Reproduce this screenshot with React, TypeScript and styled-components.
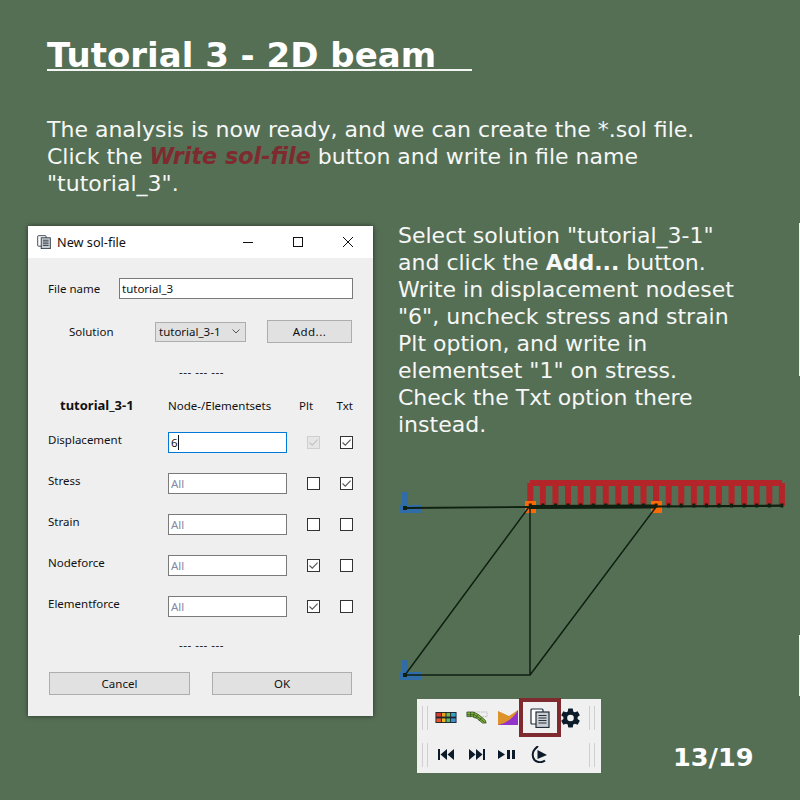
import styled, { createGlobalStyle } from 'styled-components';

const GlobalStyle = createGlobalStyle`
  html, body {
    margin: 0;
    padding: 0;
    background: #556f55;
  }
`;

const Slide = styled.div`
  position: relative;
  width: 800px;
  height: 800px;
  overflow: hidden;
  background: #556f55;
  font-family: "DejaVu Sans", sans-serif;
  color: #fff;
`;

const EdgeMark = styled.span<{ $top: number; $height: number }>`
  position: absolute;
  top: ${(p) => p.$top}px;
  right: 0;
  width: 1px;
  height: ${(p) => p.$height}px;
  background: #f4f6f4;
`;

const Header = styled.header`
  padding: 33px 0 0 47px;
`;

const Title = styled.h1`
  width: 425px;
  height: 36px;
  margin: 0;
  border-bottom: 2px solid #f4f6f4;
  font-size: 34px;
  line-height: 44px;
  font-weight: 700;
  white-space: nowrap;
`;

const Intro = styled.p`
  margin: 45px 0 0;
  font-size: 22px;
  line-height: 27px;
  color: #f6f7f6;
`;

const RedWords = styled.b`
  font-size: 22.3px;
  font-style: italic;
  color: #7f2a2e;
`;

const Columns = styled.main`
  display: flex;
  margin-top: 25px;
  padding-left: 28px;
`;

const Dialog = styled.section`
  flex: none;
  width: 345px;
  height: 490px;
  margin-top: 4px;
  background: #efefef;
  box-shadow: 0 0 5px rgba(0, 0, 0, 0.55);
  font-family: "Noto Sans", sans-serif;
  font-size: 11.5px;
  color: #111;
`;

const TitleBar = styled.div`
  display: flex;
  align-items: center;
  height: 32px;
  padding-left: 9px;
  background: #fff;
`;

const TitleText = styled.span`
  margin-left: 6px;
  flex: 1;
  font-size: 12.7px;
`;

const WindowButton = styled.span`
  display: flex;
  align-items: center;
  justify-content: center;
  width: 50px;
  height: 32px;
`;

const DialogBody = styled.div`
  padding: 20px 20px 0;
`;

const FileRow = styled.div`
  display: flex;
  align-items: center;
  justify-content: space-between;
`;

const SolutionRow = styled.div`
  display: flex;
  align-items: center;
  height: 23px;
  margin-top: 21px;
  padding-left: 21px;
`;

const SolutionLabel = styled.span`
  width: 86px;
  flex: none;
`;

const Combo = styled.div`
  display: flex;
  align-items: center;
  justify-content: space-between;
  box-sizing: border-box;
  width: 91px;
  height: 20px;
  padding: 0 5px 0 3px;
  border: 1px solid #adadad;
  background: #e1e1e1;
`;

const PushButton = styled.div<{ $width: number }>`
  display: flex;
  align-items: center;
  justify-content: center;
  box-sizing: border-box;
  width: ${(p) => p.$width}px;
  height: 23px;
  border: 1px solid #adadad;
  background: #e1e1e1;
`;

const AddButton = styled(PushButton)`
  margin-left: 21px;
  letter-spacing: 0.5px;
`;

const Dashes = styled.div<{ $top: number }>`
  height: 16px;
  margin-top: ${(p) => p.$top}px;
  line-height: 16px;
  text-align: center;
  letter-spacing: 0.5px;
  transform: translateX(1px);
`;

const HeadRow = styled.div`
  display: grid;
  grid-template-columns: 120px 119px 1fr auto;
  align-items: center;
  height: 18px;
  margin-top: 16px;
`;

const SolutionName = styled.b`
  padding-left: 12px;
  font-size: 13px;
`;

const PltHead = styled.span`
  padding-left: 12px;
`;

const ResultGrid = styled.div`
  display: grid;
  grid-template-columns: 120px 119px 46px 20px;
  grid-auto-rows: 21px;
  row-gap: 20px;
  margin-top: 18px;
`;

const ResultRow = styled.div`
  display: contents;
`;

const RowLabel = styled.span`
  line-height: 15px;
`;

const TextBox = styled.div<{ $focus?: boolean; $muted?: boolean; $wide?: boolean }>`
  display: flex;
  align-items: center;
  box-sizing: border-box;
  width: ${(p) => (p.$wide ? '234px' : 'auto')};
  height: 21px;
  padding-left: 2px;
  border: 1px solid ${(p) => (p.$focus ? '#0078d7' : '#7a7a7a')};
  background: #fff;
  color: ${(p) => (p.$muted ? '#8489a6' : '#111')};
`;

const Caret = styled.span`
  width: 1px;
  height: 15px;
  background: #111;
`;

const Check = styled.span<{ $disabled?: boolean; $side: 'left' | 'right' }>`
  display: flex;
  align-self: center;
  justify-self: ${(p) => (p.$side === 'left' ? 'start' : 'end')};
  margin-left: ${(p) => (p.$side === 'left' ? '20px' : '0')};
  box-sizing: border-box;
  width: 13px;
  height: 13px;
  border: 1px solid ${(p) => (p.$disabled ? '#cfcfcf' : '#333')};
  background: ${(p) => (p.$disabled ? '#e6e6e6' : '#fff')};
`;

const FooterRow = styled.div`
  display: flex;
  justify-content: space-between;
  margin-top: 19px;
  padding: 0 1px;
`;

const SideColumn = styled.div`
  flex: 1;
  padding-left: 25px;
`;

const SideText = styled.p`
  margin: 0;
  font-size: 22px;
  line-height: 27px;
  color: #f6f7f6;
  white-space: nowrap;
`;

const Model = styled.svg`
  display: block;
  width: 402px;
  height: 225px;
  margin-top: 31px;
`;

const BottomRow = styled.div`
  display: flex;
  align-items: flex-start;
  margin-top: 5px;
  padding-left: 19px;
`;

const Toolbar = styled.div`
  flex: none;
  width: 184px;
  height: 74px;
  background: #f0f0f0;
`;

const ToolRow = styled.div`
  display: flex;
  align-items: center;
  height: 37px;
  padding: 0 6px 0 5px;
`;

const GripPair = styled.span`
  flex: none;
  display: flex;
  gap: 4px;
`;

const Grip = styled.span`
  width: 1px;
  height: 24px;
  background: #cfcfcf;
`;

const Icons = styled.div`
  flex: 1;
  display: flex;
  align-items: center;
`;

const ToolIcon = styled.svg<{ $left: number }>`
  display: block;
  flex: none;
  margin-left: ${(p) => p.$left}px;
`;

const Highlight = styled.span`
  flex: none;
  display: flex;
  align-items: center;
  justify-content: center;
  box-sizing: border-box;
  width: 42px;
  height: 39px;
  margin: 0 0 0 1px;
  border: 4px solid #7f2a2e;
`;

const PageNumber = styled.div`
  margin: 41px 0 0 72px;
  font-size: 25.6px;
  line-height: 34px;
  font-weight: 700;
`;

const rows = [
  { name: 'Displacement', value: '6', plt: true, txt: true, focus: true, pltDisabled: true },
  { name: 'Stress', value: 'All', plt: false, txt: true },
  { name: 'Strain', value: 'All', plt: false, txt: false },
  { name: 'Nodeforce', value: 'All', plt: true, txt: false },
  { name: 'Elementforce', value: 'All', plt: true, txt: false },
];

const teeth = Array.from({ length: 21 }, (_, i) => 129.3 + i * 12.58);

function Tick({ color = '#555' }: { color?: string }) {
  return (
    <svg width="11" height="11" viewBox="0 0 11 11">
      <path d="M1.5 5.5 L4.3 8.2 L9.6 2.6" fill="none" stroke={color} strokeWidth="1.1" />
    </svg>
  );
}

function CheckBox({ on, disabled, side }: { on: boolean; disabled?: boolean; side: 'left' | 'right' }) {
  return (
    <Check $disabled={disabled} $side={side}>
      {on && <Tick color={disabled ? '#c4c4c4' : '#555'} />}
    </Check>
  );
}

function CopyGlyph({ size }: { size: number }) {
  return (
    <svg width={size} height={size} viewBox="0 0 20 20">
      <rect x="1" y="1" width="12" height="15" rx="1" fill="#fff" stroke="#1f2d3a" strokeWidth="1.2" />
      <rect x="6" y="4" width="13" height="15.5" fill="#c9cdd1" stroke="#1f2d3a" strokeWidth="1.2" />
      <path d="M8.5 7.5h8M8.5 10h8M8.5 12.5h8M8.5 15h8" stroke="#27333f" strokeWidth="1.2" />
    </svg>
  );
}

function Grips() {
  return (
    <GripPair>
      <Grip />
      <Grip />
    </GripPair>
  );
}

function Beam() {
  // coordinates are relative to the svg's corner at (398, 470) on the slide
  return (
    <Model viewBox="0 0 402 225">
      <rect x="132" y="11" width="252" height="6" fill="#b32528" />
      {teeth.map((x) => (
        <rect key={x} x={x} y="14" width="6" height="23" fill="#b32528" />
      ))}
      <path d="M127 32h11v12h-11zM253 32h11v12h-11z" fill="#fb6a07" />
      <path d="M4 23h6v13h13v8H2v-8h2zM4 191h6v12h13v8H2v-8h2z" fill="#2f6ca8" />
      <g stroke="#0f1f10" fill="none" strokeWidth="1.5">
        <path d="M7 39 L131 38" strokeWidth="1.8" />
        <path d="M131 38 L257 37.5" strokeWidth="4" />
        <path d="M257 37.5 L385 36.7" strokeWidth="2.2" />
        <path d="M7 206 H132 V38 M7 206 L131 38 M132 206 L258 38" />
      </g>
      {teeth.map((x) => (
        <rect key={x} x={x + 1.5} y="34.5" width="3" height="4" fill="#0f1f10" />
      ))}
      <rect x="5" y="37" width="4" height="4" fill="#0f1f10" />
      <rect x="5" y="204" width="4" height="4" fill="#0f1f10" />
    </Model>
  );
}

export default function App() {
  return (
    <Slide>
      <GlobalStyle />
      <EdgeMark $top={223} $height={153} />
      <EdgeMark $top={635} $height={61} />
      <Header>
        <Title>Tutorial 3 - 2D beam</Title>
        <Intro>
          The analysis is now ready, and we can create the *.sol file.
          <br />
          Click the <RedWords>Write sol-file</RedWords> button and write in file name
          <br />
          "tutorial_3".
        </Intro>
      </Header>
      <Columns>
        <Dialog>
          <TitleBar>
            <CopyGlyph size={14} />
            <TitleText>New sol-file</TitleText>
            <WindowButton>
              <svg width="10" height="10" viewBox="0 0 10 10">
                <path d="M0 5.5h10" stroke="#111" />
              </svg>
            </WindowButton>
            <WindowButton>
              <svg width="10" height="10" viewBox="0 0 10 10">
                <rect x="0.5" y="0.5" width="9" height="9" fill="none" stroke="#111" />
              </svg>
            </WindowButton>
            <WindowButton>
              <svg width="10" height="10" viewBox="0 0 10 10">
                <path d="M0 0l10 10M10 0L0 10" stroke="#111" />
              </svg>
            </WindowButton>
          </TitleBar>
          <DialogBody>
            <FileRow>
              <span>File name</span>
              <TextBox $wide>tutorial_3</TextBox>
            </FileRow>
            <SolutionRow>
              <SolutionLabel>Solution</SolutionLabel>
              <Combo>
                tutorial_3-1
                <svg width="8" height="5" viewBox="0 0 8 5">
                  <path d="M0.5 0.5L4 4l3.5-3.5" fill="none" stroke="#555" />
                </svg>
              </Combo>
              <AddButton $width={85}>Add...</AddButton>
            </SolutionRow>
            <Dashes $top={21}>--- --- ---</Dashes>
            <HeadRow>
              <SolutionName>tutorial_3-1</SolutionName>
              <span>Node-/Elementsets</span>
              <PltHead>Plt</PltHead>
              <span>Txt</span>
            </HeadRow>
            <ResultGrid>
              {rows.map((row) => (
                <ResultRow key={row.name}>
                  <RowLabel>{row.name}</RowLabel>
                  <TextBox $focus={row.focus} $muted={!row.focus}>
                    {row.value}
                    {row.focus && <Caret />}
                  </TextBox>
                  <CheckBox on={row.plt} disabled={row.pltDisabled} side="left" />
                  <CheckBox on={row.txt} side="right" />
                </ResultRow>
              ))}
            </ResultGrid>
            <Dashes $top={20}>--- --- ---</Dashes>
            <FooterRow>
              <PushButton $width={141}>Cancel</PushButton>
              <PushButton $width={140}>OK</PushButton>
            </FooterRow>
          </DialogBody>
        </Dialog>
        <SideColumn>
          <SideText>
            Select solution "tutorial_3-1"
            <br />
            and click the <b>Add...</b> button.
            <br />
            Write in displacement nodeset
            <br />
            "6", uncheck stress and strain
            <br />
            Plt option, and write in
            <br />
            elementset "1" on stress.
            <br />
            Check the Txt option there
            <br />
            instead.
          </SideText>
          <Beam />
          <BottomRow>
            <Toolbar>
              <ToolRow>
                <Grips />
                <Icons>
                  <ToolIcon $left={7} width="22" height="11" viewBox="0 0 23 12">
                    <rect width="23" height="12" fill="#1b2430" />
                    <path d="M1 1h5v4H1z" fill="#d8392b" />
                    <path d="M7 1h4v4H7z" fill="#e8a020" />
                    <path d="M12 1h4v4h-4z" fill="#79b844" />
                    <path d="M17 1h5v4h-5z" fill="#3aa0c8" />
                    <path d="M1 7h5v4H1z" fill="#e2572b" />
                    <path d="M7 7h4v4H7z" fill="#e9b72a" />
                    <path d="M12 7h4v4h-4z" fill="#58b868" />
                    <path d="M17 7h5v4h-5z" fill="#3f8fd0" />
                  </ToolIcon>
                  <ToolIcon $left={9} width="22" height="13" viewBox="0 0 24 14">
                    <path d="M9 1h14v5H17" fill="none" stroke="#b5b5b5" strokeDasharray="1.5 1" />
                    <path d="M1 1h7l6 3 7 6 1 3-4 0-6-5-5-2H1z" fill="#7fb13a" stroke="#26401c" strokeWidth="0.8" />
                    <path d="M5 1v5M9 1l-1 6M13 4l-3 4M17 7l-3 4M1 4h8l6 4 5 4" fill="none" stroke="#26401c" strokeWidth="0.7" />
                  </ToolIcon>
                  <ToolIcon $left={10} width="20" height="15" viewBox="0 0 20 15">
                    <path d="M0 1 L11 6 L20 0 V15 H0z" fill="#dd922a" />
                    <path d="M0 15 C8 13 15 9 20 0 V15z" fill="#9333c9" />
                  </ToolIcon>
                  <Highlight>
                    <CopyGlyph size={20} />
                  </Highlight>
                  <ToolIcon $left={0} width="19" height="20" viewBox="2 1.5 20 21">
                    <path
                      fill="#0c1b2a"
                      d="M19.43 12.98c.04-.32.07-.64.07-.98s-.03-.66-.07-.98l2.11-1.65a.5.5 0 0 0 .12-.64l-2-3.46a.5.5 0 0 0-.61-.22l-2.49 1a7.3 7.3 0 0 0-1.69-.98l-.38-2.65A.49.49 0 0 0 14 2h-4a.49.49 0 0 0-.49.42l-.38 2.65c-.61.25-1.17.59-1.69.98l-2.49-1a.49.49 0 0 0-.61.22l-2 3.46a.49.49 0 0 0 .12.64l2.11 1.65c-.04.32-.07.65-.07.98s.03.66.07.98l-2.11 1.65a.5.5 0 0 0-.12.64l2 3.46c.12.22.39.3.61.22l2.49-1c.52.4 1.08.73 1.69.98l.38 2.65c.03.24.24.42.49.42h4c.25 0 .46-.18.49-.42l.38-2.65c.61-.25 1.17-.59 1.69-.98l2.49 1c.23.09.49 0 .61-.22l2-3.46a.5.5 0 0 0-.12-.64zM12 15.5a3.5 3.5 0 1 1 0-7 3.5 3.5 0 0 1 0 7z"
                    />
                  </ToolIcon>
                </Icons>
                <Grips />
              </ToolRow>
              <ToolRow>
                <Grips />
                <Icons>
                  <ToolIcon $left={10} width="16" height="11" viewBox="0 0 16 11">
                    <path d="M0 0h2v11H0zM9 0v11L2.5 5.5zM16 0v11L9.5 5.5z" fill="#0c1b2a" />
                  </ToolIcon>
                  <ToolIcon $left={15} width="16" height="11" viewBox="0 0 16 11">
                    <path d="M16 0h-2v11h2zM7 0v11l6.5-5.5zM0 0v11l6.5-5.5z" fill="#0c1b2a" />
                  </ToolIcon>
                  <ToolIcon $left={13} width="17" height="9" viewBox="0 0 17 9">
                    <path d="M0 0v9l7-4.5zM9 0h3v9H9zM14 0h3v9h-3z" fill="#0c1b2a" />
                  </ToolIcon>
                  <ToolIcon $left={16} width="17" height="17" viewBox="0 0 17 17">
                    <path d="M7 0 L4 3 C1 6 1 11 3.5 14 C6 16.5 11 17 14 14.5" fill="none" stroke="#0c1b2a" strokeWidth="2" />
                    <path d="M6.5 4 L16 9 L6.5 13z" fill="#0c1b2a" />
                  </ToolIcon>
                </Icons>
                <Grips />
              </ToolRow>
            </Toolbar>
            <PageNumber>13/19</PageNumber>
          </BottomRow>
        </SideColumn>
      </Columns>
    </Slide>
  );
}
